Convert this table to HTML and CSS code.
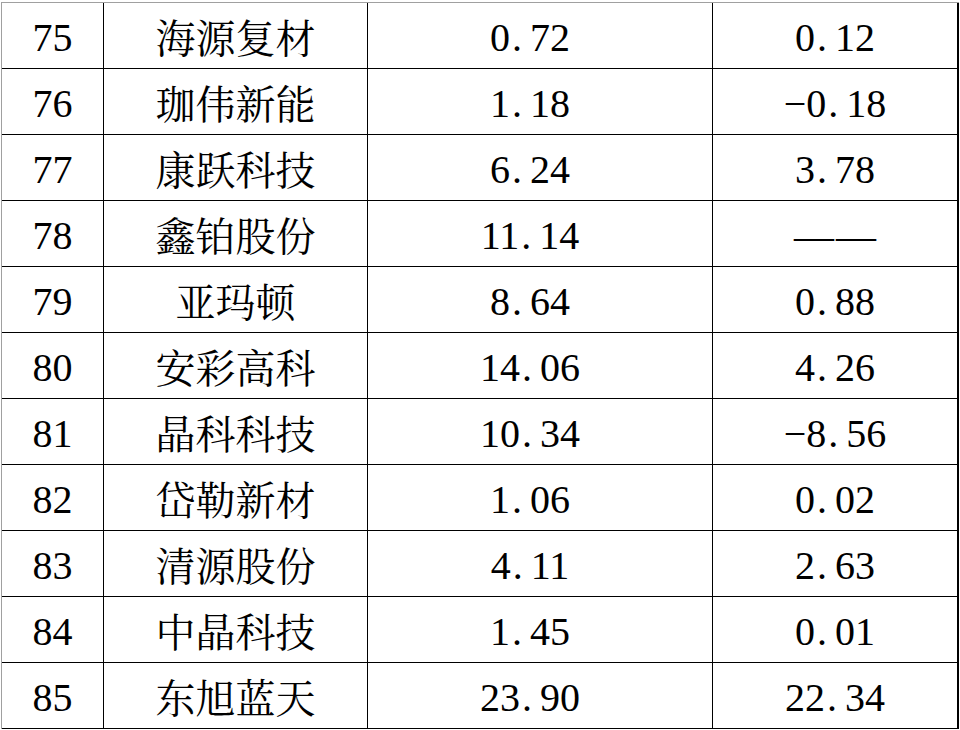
FILE: index.html
```html
<!DOCTYPE html>
<html lang="zh-CN">
<head>
<meta charset="utf-8">
<title>表格</title>
<link rel="stylesheet" href="styles.css">
</head>
<body>
<div class="sheet">
  <div class="row"><div class="c c1">75</div><div class="c c2">海源复材</div><div class="c c3">0<span class="dot">.</span>72</div><div class="c c4">0<span class="dot">.</span>12</div></div>
  <div class="row"><div class="c c1">76</div><div class="c c2">珈伟新能</div><div class="c c3">1<span class="dot">.</span>18</div><div class="c c4"><span class="minus">−</span>0<span class="dot">.</span>18</div></div>
  <div class="row"><div class="c c1">77</div><div class="c c2">康跃科技</div><div class="c c3">6<span class="dot">.</span>24</div><div class="c c4">3<span class="dot">.</span>78</div></div>
  <div class="row"><div class="c c1">78</div><div class="c c2">鑫铂股份</div><div class="c c3">11<span class="dot">.</span>14</div><div class="c c4"><span class="dash">—</span><span class="dash">—</span></div></div>
  <div class="row"><div class="c c1">79</div><div class="c c2">亚玛顿</div><div class="c c3">8<span class="dot">.</span>64</div><div class="c c4">0<span class="dot">.</span>88</div></div>
  <div class="row"><div class="c c1">80</div><div class="c c2">安彩高科</div><div class="c c3">14<span class="dot">.</span>06</div><div class="c c4">4<span class="dot">.</span>26</div></div>
  <div class="row"><div class="c c1">81</div><div class="c c2">晶科科技</div><div class="c c3">10<span class="dot">.</span>34</div><div class="c c4"><span class="minus">−</span>8<span class="dot">.</span>56</div></div>
  <div class="row"><div class="c c1">82</div><div class="c c2">岱勒新材</div><div class="c c3">1<span class="dot">.</span>06</div><div class="c c4">0<span class="dot">.</span>02</div></div>
  <div class="row"><div class="c c1">83</div><div class="c c2">清源股份</div><div class="c c3">4<span class="dot">.</span>11</div><div class="c c4">2<span class="dot">.</span>63</div></div>
  <div class="row"><div class="c c1">84</div><div class="c c2">中晶科技</div><div class="c c3">1<span class="dot">.</span>45</div><div class="c c4">0<span class="dot">.</span>01</div></div>
  <div class="row"><div class="c c1">85</div><div class="c c2">东旭蓝天</div><div class="c c3">23<span class="dot">.</span>90</div><div class="c c4">22<span class="dot">.</span>34</div></div>
</div>
</body>
</html>
```

FILE: styles.css
```css
html, body {
  margin: 0;
  background: #fff;
}
body {
  padding: 2px 0 0 1px;
}
.sheet {
  display: grid;
  grid-template-columns: 102px 264px 345px 246px;
  grid-auto-rows: 66px;
  border-top: 1px solid #a0a0a0;
  border-left: 1px solid #a0a0a0;
  width: max-content;
}
.row {
  display: contents;
}
.c {
  box-sizing: border-box;
  border-right: 1px solid #000;
  border-bottom: 1px solid #000;
  display: flex;
  align-items: center;
  justify-content: center;
  padding-top: 5px;
  font-family: "Liberation Serif", Tinos, "DejaVu Serif", serif;
  font-size: 40px;
  line-height: 44px;
  color: #000;
  white-space: nowrap;
}
.c2 {
  font-family: "Noto Serif CJK SC", "Noto Sans CJK SC", serif;
  padding-top: 0;
}
.c3 {
  padding-right: 20px;
}
.c4 {
  border-right-width: 2px;
}
.dot {
  display: inline-block;
  width: 0.5em;
  text-align: left;
  padding-left: 2px;
  box-sizing: border-box;
}
.minus {
  line-height: 0;
  vertical-align: 0.12em;
}
.dash {
  line-height: 0;
  vertical-align: 0.33em;
  margin: 0 1px;
}
```
